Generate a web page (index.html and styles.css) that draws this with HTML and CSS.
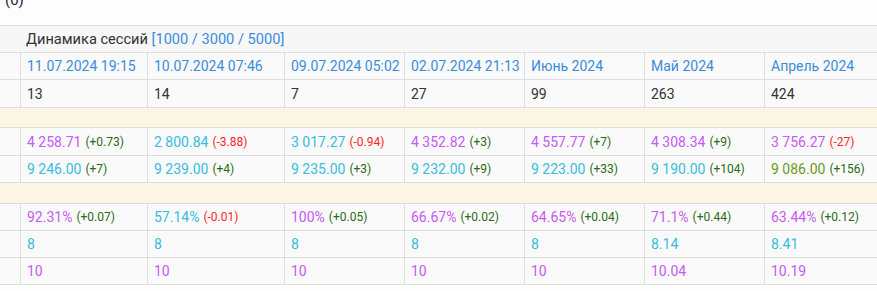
FILE: index.html
```html
<!DOCTYPE html>
<html lang="ru">
<head>
<meta charset="utf-8">
<link rel="stylesheet" href="styles.css">
</head>
<body>
<div class="top"><span class="top-text">(0)</span></div>
<div class="grid">
  <div class="c head"><span>Динамика сессий <span class="blue">[1000 / 3000 / 5000]</span></span></div>

  <div class="c r1 first"></div>
  <div class="c r1 blue">11.07.2024 19:15</div>
  <div class="c r1 blue">10.07.2024 07:46</div>
  <div class="c r1 blue">09.07.2024 05:02</div>
  <div class="c r1 blue">02.07.2024 21:13</div>
  <div class="c r1 blue">Июнь 2024</div>
  <div class="c r1 blue">Май 2024</div>
  <div class="c r1 blue">Апрель 2024</div>

  <div class="c r2 first"></div>
  <div class="c r2 dark">13</div>
  <div class="c r2 dark">14</div>
  <div class="c r2 dark">7</div>
  <div class="c r2 dark">27</div>
  <div class="c r2 dark">99</div>
  <div class="c r2 dark">263</div>
  <div class="c r2 dark">424</div>

  <div class="c sep sep1"></div>

  <div class="c r2 first"></div>
  <div class="c r2"><span class="purple">4 258.71</span><span class="d up">(+0.73)</span></div>
  <div class="c r2"><span class="cyan">2 800.84</span><span class="d down">(-3.88)</span></div>
  <div class="c r2"><span class="cyan">3 017.27</span><span class="d down">(-0.94)</span></div>
  <div class="c r2"><span class="purple">4 352.82</span><span class="d up">(+3)</span></div>
  <div class="c r2"><span class="purple">4 557.77</span><span class="d up">(+7)</span></div>
  <div class="c r2"><span class="purple">4 308.34</span><span class="d up">(+9)</span></div>
  <div class="c r2"><span class="purple">3 756.27</span><span class="d down">(-27)</span></div>

  <div class="c r1 first"></div>
  <div class="c r1"><span class="cyan">9 246.00</span><span class="d up">(+7)</span></div>
  <div class="c r1"><span class="cyan">9 239.00</span><span class="d up">(+4)</span></div>
  <div class="c r1"><span class="cyan">9 235.00</span><span class="d up">(+3)</span></div>
  <div class="c r1"><span class="cyan">9 232.00</span><span class="d up">(+9)</span></div>
  <div class="c r1"><span class="cyan">9 223.00</span><span class="d up">(+33)</span></div>
  <div class="c r1"><span class="cyan">9 190.00</span><span class="d up">(+104)</span></div>
  <div class="c r1"><span class="olive">9 086.00</span><span class="d up">(+156)</span></div>

  <div class="c sep sep2"></div>

  <div class="c r1 first"></div>
  <div class="c r1"><span class="purple">92.31%</span><span class="d up">(+0.07)</span></div>
  <div class="c r1"><span class="cyan">57.14%</span><span class="d down">(-0.01)</span></div>
  <div class="c r1"><span class="purple">100%</span><span class="d up">(+0.05)</span></div>
  <div class="c r1"><span class="purple">66.67%</span><span class="d up">(+0.02)</span></div>
  <div class="c r1"><span class="purple">64.65%</span><span class="d up">(+0.04)</span></div>
  <div class="c r1"><span class="purple">71.1%</span><span class="d up">(+0.44)</span></div>
  <div class="c r1"><span class="purple">63.44%</span><span class="d up">(+0.12)</span></div>

  <div class="c r1 first"></div>
  <div class="c r1 cyan">8</div>
  <div class="c r1 cyan">8</div>
  <div class="c r1 cyan">8</div>
  <div class="c r1 cyan">8</div>
  <div class="c r1 cyan">8</div>
  <div class="c r1 cyan">8.14</div>
  <div class="c r1 cyan">8.41</div>

  <div class="c r1 first"></div>
  <div class="c r1 purple">10</div>
  <div class="c r1 purple">10</div>
  <div class="c r1 purple">10</div>
  <div class="c r1 purple">10</div>
  <div class="c r1 purple">10</div>
  <div class="c r1 purple">10.04</div>
  <div class="c r1 purple">10.19</div>
</div>
</body>
</html>
```

FILE: styles.css
```css
html, body {
  margin: 0;
  padding: 0;
  background: #fdfdfd;
  overflow: hidden;
}
body {
  font-family: Roboto, "Liberation Sans", Arial, sans-serif;
  font-size: 14px;
  color: #333;
  width: 877px;
  height: 291px;
}
.top {
  border-bottom: 1px solid #dedede;
  box-sizing: border-box;
  height: 26px;
  overflow: hidden;
  padding-left: 5px;
  background: #fdfdfd;
}
.top-text {
  display: block;
  font-size: 15px;
  line-height: 15px;
  margin-top: -7px;
  color: #1f2440;
}
.grid {
  display: grid;
  grid-template-columns: 21px 127px 137px 120px 120px 120px 120px 120px;
  width: 885px;
}
.c {
  box-sizing: border-box;
  border-right: 1px solid #dedede;
  border-bottom: 1px solid #dedede;
  padding: 0 6px;
  display: flex;
  align-items: center;
  white-space: nowrap;
  background: #fafafa;
}
.head {
  grid-column: 1 / -1;
  height: 27px;
  padding-left: 26px;
  background: #f7f7f7;
  border-right: none;
  color: #333;
  font-size: 14.6px;
}
.r1 { height: 27px; }
.r2 { height: 28px; }
.first { padding: 0; }
.sep {
  grid-column: 1 / -1;
  background: #fdf6e4;
  border-right: none;
}
.sep1 { height: 20px; }
.sep2 { height: 21px; }
.blue { color: #3a8cdc; }
.dark { color: #333; }
.purple { color: #c65bf4; }
.cyan { color: #38bce0; }
.olive { color: #6a9a1c; }
.d {
  font-size: 12px;
  margin-left: 4px;
}
.up { color: #2b6a16; }
.down { color: #ff2424; }
```
